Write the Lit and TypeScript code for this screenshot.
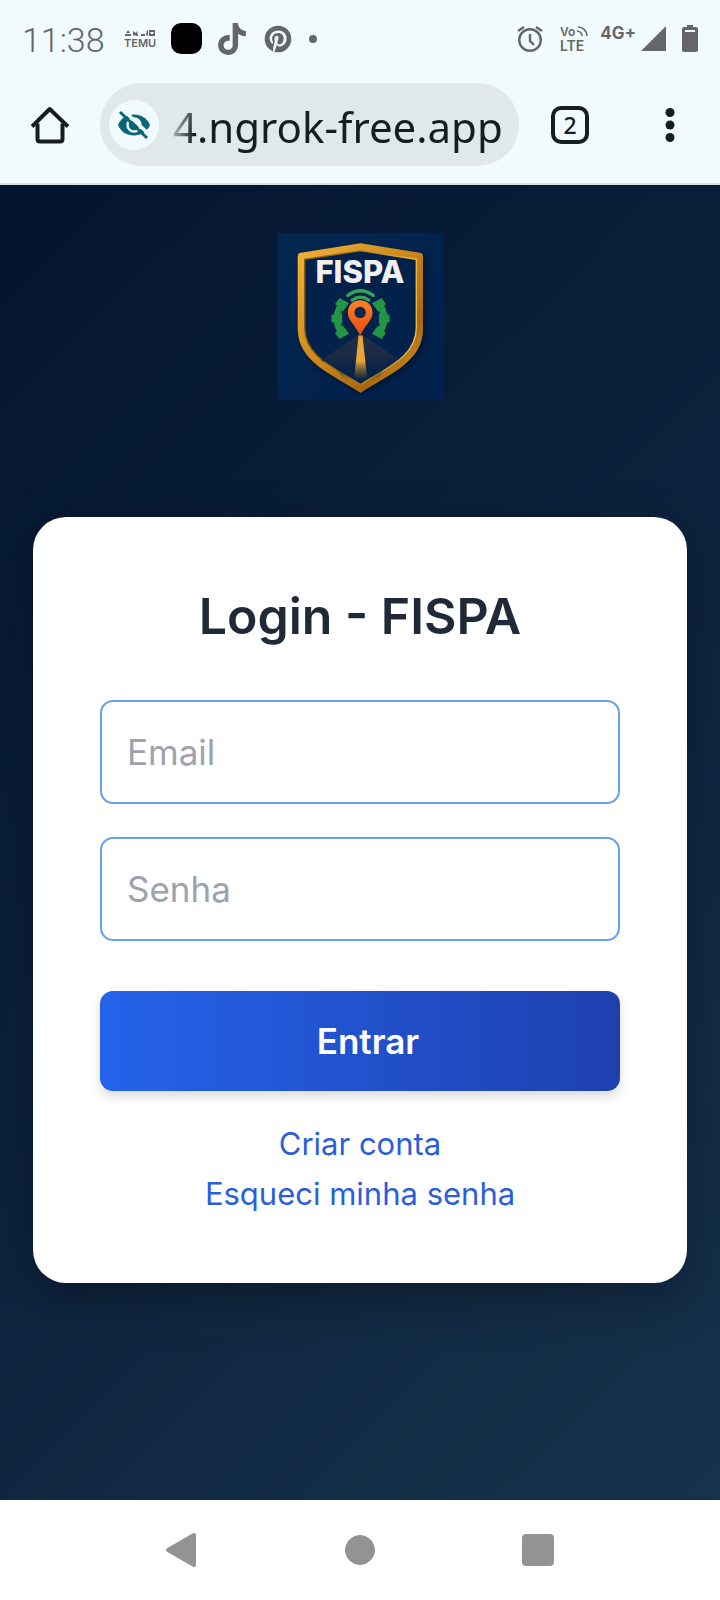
import { LitElement, html, css, svg } from "lit";
import { customElement } from "lit/decorators.js";

const gearTeeth = [180, 143, 217, 37, 0, -37];

@customElement("status-bar")
class StatusBar extends LitElement {
  static styles = css`
    :host {
      display: flex;
      justify-content: space-between;
      align-items: center;
      height: 77px;
      box-sizing: border-box;
      padding: 0 22px;
      color: #636769;
      font-family: "Inter", sans-serif;
    }
    .group {
      display: flex;
      align-items: center;
    }
    .left {
      gap: 14px;
    }
    .time {
      font-family: "Roboto", sans-serif;
      font-size: 34px;
      font-weight: 300;
      line-height: 40px;
      padding-top: 2px;
      margin-right: 5px;
    }
    .network {
      font-size: 17px;
      line-height: 20px;
      font-weight: 700;
      padding-bottom: 12px;
      margin: 0 4px 0 11px;
    }
    svg {
      display: block;
      fill: currentColor;
    }
    .line {
      fill: none;
      stroke: currentColor;
    }
    .label {
      font-family: "Inter", sans-serif;
      font-weight: 600;
    }
    .black {
      fill: #000;
    }
    .cut {
      fill: #f1fafd;
    }
  `;

  render() {
    return html`
      <div class="group left">
        <span class="time">11:38</span>
        <svg width="33" height="22" viewBox="0 0 33 22" aria-label="Temu">
          <path d="M1 6h6v2H1zM4 2l2 3H2zM9 3l3 2 1-2 1 5h-2l-1-1-2 1zM17 6h4v2h-4zM22 7l1-5 1 1v5zM25 2h6v6h-6z" />
          <path class="cut" d="M26 4h4l-1 2h-2z" />
          <text class="label" x="0" y="19" font-size="11">TEMU</text>
        </svg>
        <svg width="31" height="32" viewBox="0 0 31 32">
          <rect class="black" y="0" width="31" height="31" rx="10" />
        </svg>
        <svg width="32" height="32" viewBox="0 0 24 24" aria-label="TikTok">
          <path
            d="M12.525.02c1.31-.02 2.61-.01 3.91-.02.08 1.53.63 3.09 1.75 4.17 1.12 1.11 2.7 1.62 4.24 1.79v4.03c-1.44-.05-2.89-.35-4.2-.97-.57-.26-1.1-.59-1.62-.93-.01 2.92.01 5.84-.02 8.75-.08 1.4-.54 2.79-1.35 3.94-1.31 1.92-3.58 3.17-5.91 3.21-1.43.08-2.86-.31-4.08-1.03-2.02-1.19-3.44-3.37-3.65-5.71-.02-.5-.03-1-.01-1.49.18-1.9 1.12-3.72 2.58-4.96 1.66-1.44 3.98-2.13 6.15-1.72.02 1.48-.04 2.96-.04 4.44-.99-.32-2.15-.23-3.02.37-.63.41-1.11 1.04-1.36 1.75-.21.51-.15 1.07-.14 1.61.24 1.64 1.82 3.02 3.5 2.87 1.12-.01 2.19-.66 2.77-1.61.19-.33.4-.67.41-1.06.1-1.79.06-3.57.07-5.36.01-4.03-.01-8.05.02-12.07z"
          />
        </svg>
        <svg width="32" height="32" viewBox="0 0 24 24" aria-label="Pinterest">
          <path
            d="M9.04 21.54c.96.29 1.93.46 2.96.46a10 10 0 0 0 10-10A10 10 0 0 0 12 2 10 10 0 0 0 2 12c0 4.25 2.67 7.9 6.44 9.34-.09-.78-.18-2.07 0-2.96l1.15-4.94s-.29-.58-.29-1.5c0-1.38.86-2.41 1.84-2.41.86 0 1.26.63 1.26 1.44 0 .86-.57 2.09-.86 3.27-.17.98.52 1.84 1.52 1.84 1.78 0 3.16-1.9 3.16-4.58 0-2.4-1.72-4.04-4.19-4.04-2.82 0-4.48 2.1-4.48 4.31 0 .86.28 1.73.74 2.3.09.06.09.14.06.29l-.29 1.09c0 .17-.11.23-.28.11-1.28-.56-2.02-2.38-2.02-3.85 0-3.16 2.24-6.03 6.56-6.03 3.44 0 6.12 2.47 6.12 5.75 0 3.44-2.13 6.2-5.18 6.2-.97 0-1.92-.52-2.26-1.13l-.67 2.37c-.23.86-.86 2.01-1.29 2.7v-.03z"
          />
        </svg>
        <svg width="10" height="10" viewBox="0 0 10 10"><circle cx="5" cy="5" r="4" /></svg>
      </div>
      <div class="group">
        <svg width="26" height="28" viewBox="0 0 26 28" aria-label="Alarm">
          <g class="line" stroke-width="2.4">
            <circle cx="13" cy="15" r="10.8" />
            <path d="M13 9v7l4 4M1 6l6-4M25 6l-6-4" />
          </g>
        </svg>
        <svg width="46" height="28" viewBox="0 0 46 28">
          <text class="label" x="17" y="11" font-size="12">Vo</text>
          <text class="label" x="17" y="26" font-size="14">LTE</text>
          <path class="line" stroke-width="1.6" d="M35 2a9 9 0 0 1 9 9M34 6a5 5 0 0 1 5 5" />
        </svg>
        <span class="network">4G+</span>
        <svg width="26" height="28" viewBox="0 0 26 28"><path d="M26 1v25H1z" /></svg>
        <svg width="32" height="28" viewBox="0 0 32 28">
          <path d="M21 0h6v2h3q2 0 2 2v21q0 2-2 2H18q-2 0-2-2V4q0-2 2-2h3z" />
          <path class="cut" d="M19 5h10v2H19z" />
        </svg>
      </div>
    `;
  }
}

@customElement("browser-bar")
class BrowserBar extends LitElement {
  static styles = css`
    :host {
      display: flex;
      align-items: center;
      height: 108px;
      box-sizing: border-box;
      padding: 6px 31px 17px;
      border-bottom: 2px solid #d7e1e4;
      font-family: "Noto Sans", sans-serif;
    }
    button {
      border: 0;
      padding: 0;
      background: none;
      color: #171d1f;
      font: inherit;
      display: grid;
      place-items: center;
    }
    svg {
      display: block;
    }
    .pill {
      flex: 1;
      min-width: 0;
      display: flex;
      align-items: center;
      gap: 14px;
      height: 83px;
      box-sizing: border-box;
      margin: 0 32px 0 31px;
      padding: 0 14px 0 9px;
      border-radius: 42px;
      background: #e0e8ea;
    }
    .eye {
      flex: none;
      width: 50px;
      height: 50px;
      border-radius: 50%;
      background: #f1fafd;
    }
    .url {
      flex: 1;
      min-width: 0;
      border: 0;
      padding: 4px 0 0;
      background: none;
      color: #171d1f;
      font-family: "Noto Sans", sans-serif;
      font-size: 42px;
      line-height: 60px;
      height: 60px;
      mask-image: linear-gradient(100deg, transparent, #000 28px);
    }
    .tabs {
      width: 38px;
      height: 38px;
      box-sizing: border-box;
      border: 4px solid #171d1f;
      border-radius: 10px;
      font-size: 23px;
      line-height: 28px;
      font-weight: 500;
    }
    .more {
      width: 38px;
      height: 38px;
      margin-left: 62px;
    }
  `;

  render() {
    return html`
      <button aria-label="Home">
        <svg width="38" height="38" viewBox="0 0 38 38" fill="none" stroke="currentColor" stroke-width="4">
          <path d="M6.5 17.5V33q0 2.500 2.500 2.500h20q2.500 0 2.500-2.500V17.500" />
          <path d="M1 20.500 18.700 3 37 20.500" stroke-linejoin="round" />
        </svg>
      </button>
      <div class="pill">
        <button class="eye" aria-label="Site settings">
          <svg width="34" height="30" viewBox="0 0 34 30" fill="none">
            <path d="M1 15C4 8 10 4.500 17 4.500S30 8 33 15C30 22 24 25.500 17 25.500S4 22 1 15z" fill="#0b6577" />
            <circle cx="17" cy="15" r="6.500" stroke="#f1fafd" stroke-width="2.400" />
            <path d="M5-1 35 27" stroke="#f1fafd" stroke-width="3.500" />
            <path d="M3 2 30 28" stroke="#0b6577" stroke-width="3" />
          </svg>
        </button>
        <input class="url" type="text" aria-label="Address" value="4.ngrok-free.app" />
      </div>
      <button class="tabs" aria-label="Open tabs">2</button>
      <button class="more" aria-label="Menu">
        <svg width="10" height="36" viewBox="0 0 10 36" fill="currentColor">
          <circle cx="5" cy="5.500" r="4.500" /><circle cx="5" cy="18" r="4.500" /><circle cx="5" cy="30.500" r="4.500" />
        </svg>
      </button>
    `;
  }
}

@customElement("fispa-logo")
class FispaLogo extends LitElement {
  static styles = css`
    :host,
    svg {
      display: block;
    }
    svg {
      width: 167px;
      height: 167px;
    }
    .name {
      font-family: "Inter", sans-serif;
      font-weight: 800;
      font-size: 93px;
      fill: #f0f0f0;
    }
  `;

  render() {
    return html`
      <svg viewBox="50 39 500 500" role="img" aria-label="FISPA">
        <defs>
          <linearGradient id="back" x1="0" y1="0" x2="1" y2="1">
            <stop offset="0" stop-color="#03264f" />
            <stop offset="1" stop-color="#01204b" />
          </linearGradient>
          <linearGradient id="gold" x1="0" y1="0" x2="1" y2="1">
            <stop offset="0" stop-color="#f2b43a" />
            <stop offset="0.500" stop-color="#c98518" />
            <stop offset="0.750" stop-color="#a8680f" />
            <stop offset="1" stop-color="#e8ab3a" />
          </linearGradient>
          <linearGradient id="shine" x1="0" y1="0" x2="1" y2="0">
            <stop offset="0" stop-color="#8a5a0c" />
            <stop offset="0.500" stop-color="#b27a1c" />
            <stop offset="1" stop-color="#f0bd50" />
          </linearGradient>
          <linearGradient id="pin" x1="0" y1="0" x2="0" y2="1">
            <stop offset="0" stop-color="#ff8128" />
            <stop offset="1" stop-color="#e84a10" />
          </linearGradient>
          <linearGradient id="road" x1="0" y1="0" x2="0" y2="1">
            <stop offset="0" stop-color="#222f45" />
            <stop offset="0.500" stop-color="#182a45" />
            <stop offset="1" stop-color="#082348" stop-opacity="0" />
          </linearGradient>
          <linearGradient id="lane" x1="0" y1="0" x2="0" y2="1">
            <stop offset="0.600" stop-color="#e6a536" />
            <stop offset="1" stop-color="#a77322" stop-opacity="0.100" />
          </linearGradient>
          <filter id="soft" x="-20%" y="-20%" width="150%" height="150%">
            <feDropShadow dx="8" dy="8" stdDeviation="7" flood-color="#000a20" flood-opacity="0.700" />
          </filter>
        </defs>
        <rect x="50" y="39" width="500" height="500" fill="url(#back)" />
        <path
          filter="url(#soft)"
          fill="url(#gold)"
          d="M300 70L477 98Q487 99 487 109V325C487 425 385 462 300 517C215 462 112 425 112 325V109Q112 99 122 98z"
        />
        <path
          fill="#02214b"
          stroke="url(#shine)"
          stroke-width="4"
          d="M300 92L467 118V323C467 410 378 442 300 493C222 442 133 410 133 323V118z"
        />
        <text class="name" x="165" y="190">FISPA</text>
        <g fill="#249447">
          ${gearTeeth.map(
            (a) => svg`<path d="M355 279L387 284V306L355 311z" transform="rotate(${a} 300 295)" />`
          )}
        </g>
        <path d="M250 344A68 68 0 0 1 250 246M350 344A68 68 0 0 0 350 246" fill="none" stroke="#249447" stroke-width="19" />
        <path d="M262 226Q300 198 338 226M275 240Q300 222 325 240" fill="none" stroke="#35a457" stroke-width="10" stroke-linecap="round" />
        <path d="M292 345H308L415 418Q360 440 355 480H245Q240 440 182 420z" fill="url(#road)" />
        <path d="M294 346H306L320 474H281z" fill="url(#lane)" />
        <path
          fill="url(#pin)"
          d="M299 240C277 240 262 256 262 277C262 300 285 315 299 346C313 315 336 300 336 277C336 256 321 240 299 240z"
        />
        <circle cx="299" cy="277" r="17" fill="#07284f" />
      </svg>
    `;
  }
}

@customElement("login-card")
class LoginCard extends LitElement {
  static styles = css`
    :host {
      display: block;
      box-sizing: border-box;
      padding: 66px 67px 64px;
      border-radius: 33px;
      background: #fff;
      box-shadow: 0 16px 50px rgba(0, 0, 0, 0.3);
      font-family: "Inter", sans-serif;
    }
    form {
      display: flex;
      flex-direction: column;
    }
    h1 {
      margin: 0 0 51px;
      color: #1f2937;
      font-size: 50px;
      line-height: 66px;
      font-weight: 600;
      text-align: center;
    }
    .field {
      box-sizing: border-box;
      width: 100%;
      height: 104px;
      margin-bottom: 33px;
      padding: 0 25px;
      border: 2px solid #689fe8;
      border-radius: 13px;
      background: #fff;
      color: #1f2937;
      font: inherit;
      font-size: 35px;
      outline: 0;
    }
    .field::placeholder {
      color: #9ca3af;
      opacity: 1;
    }
    .submit {
      height: 100px;
      margin: 17px 0 28px;
      padding: 0 0 0 16px;
      border: 0;
      border-radius: 13px;
      background: linear-gradient(90deg, #2563eb, #1e40af);
      box-shadow: 0 6px 12px rgba(0, 0, 0, 0.14);
      color: #fff;
      font: inherit;
      font-size: 35px;
      font-weight: 600;
    }
    .links {
      display: flex;
      flex-direction: column;
      align-items: center;
    }
    a {
      color: #2b5fd9;
      font-size: 31px;
      line-height: 50px;
      text-decoration: none;
    }
  `;

  render() {
    return html`
      <form @submit=${(e: Event) => e.preventDefault()}>
        <h1>Login - FISPA</h1>
        <input class="field" type="email" placeholder="Email" aria-label="Email" />
        <input class="field" type="password" placeholder="Senha" aria-label="Senha" />
        <button class="submit" type="submit">Entrar</button>
        <nav class="links">
          <a href="#criar">Criar conta</a>
          <a href="#senha">Esqueci minha senha</a>
        </nav>
      </form>
    `;
  }
}

@customElement("system-nav")
class SystemNav extends LitElement {
  static styles = css`
    :host {
      display: flex;
      justify-content: center;
      height: 100px;
      background: #fff;
    }
    .keys {
      display: grid;
      grid-template-columns: repeat(3, 1fr);
      width: 534px;
      max-width: 100%;
    }
    button {
      border: 0;
      padding: 0;
      background: none;
      display: grid;
      place-items: center;
    }
    svg {
      display: block;
      fill: #939393;
      stroke: #939393;
    }
  `;

  render() {
    return html`
      <div class="keys">
        <button aria-label="Back">
          <svg width="34" height="36" viewBox="0 0 34 36">
            <path d="M29 3V33L3 18z" stroke-width="4" stroke-linejoin="round" />
          </svg>
        </button>
        <button aria-label="Home">
          <svg width="30" height="30" viewBox="0 0 30 30"><circle cx="15" cy="15" r="14.500" /></svg>
        </button>
        <button aria-label="Recent apps">
          <svg width="32" height="32" viewBox="0 0 32 32"><rect x=".5" y=".5" width="31" height="31" rx="3" /></svg>
        </button>
      </div>
    `;
  }
}

@customElement("app-root")
class AppRoot extends LitElement {
  static styles = css`
    :host {
      display: flex;
      flex-direction: column;
      min-height: 100vh;
      background: #f1fafd;
    }
    main {
      flex: 1;
      display: flex;
      flex-direction: column;
      box-sizing: border-box;
      padding: 48px 33px;
      background: linear-gradient(135deg, #03142e, #0d223e 50%, #16324c);
    }
    .logo {
      align-self: center;
      margin-bottom: 117px;
    }
  `;

  render() {
    return html`
      <status-bar></status-bar>
      <browser-bar></browser-bar>
      <main>
        <fispa-logo class="logo"></fispa-logo>
        <login-card></login-card>
      </main>
      <system-nav></system-nav>
    `;
  }
}
